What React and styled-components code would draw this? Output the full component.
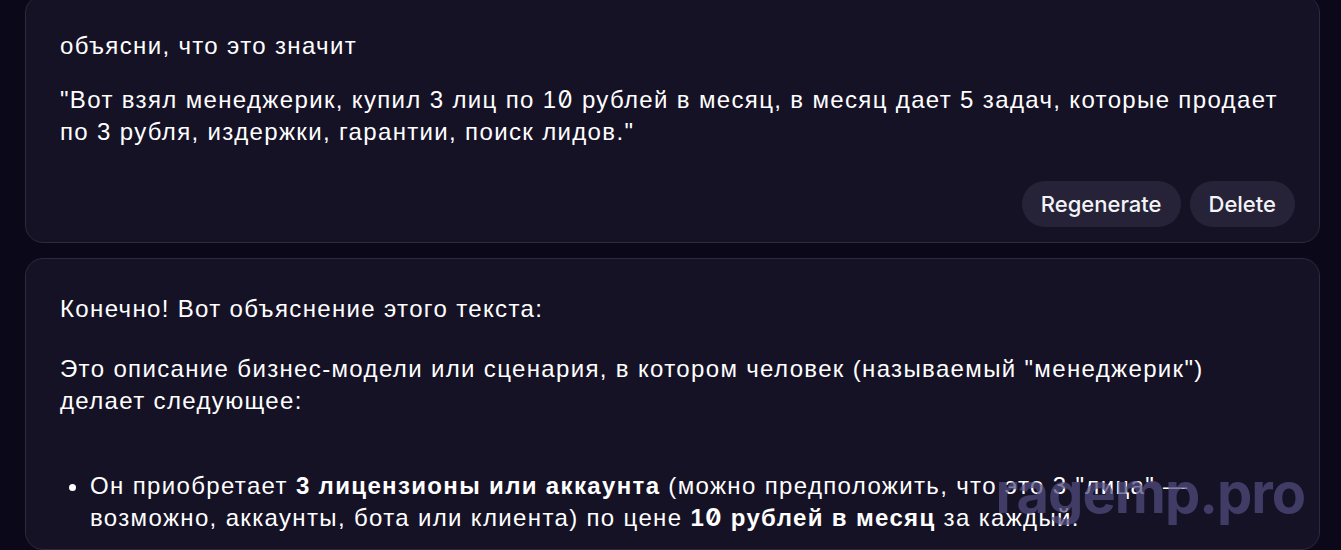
import styled, { createGlobalStyle } from 'styled-components';

const GlobalStyle = createGlobalStyle`
  html, body {
    margin: 0;
    padding: 0;
    background: #0b0819;
    overflow: hidden;
  }
  body {
    font-family: 'Liberation Sans', Arial, sans-serif;
    color: #ffffff;
  }
`;

const Page = styled.div`
  position: relative;
  height: 550px;
  padding: 0 21px 0 25px;
  overflow: hidden;
`;

const Feed = styled.div`
  display: flex;
  flex-direction: column;
  gap: 15px;
  margin-top: -5px;
`;

const Card = styled.div`
  background: #161226;
  border: 1px solid #2d2a3d;
  border-radius: 18px;
  padding: 34px 24px 15px 34px;
`;

const Text = styled.p`
  margin: 0 0 ${(p) => p.$gap || 0}px 0;
  font-size: 24px;
  line-height: 32px;
  letter-spacing: 1.35px;
  padding-right: 6px;
`;

const Zero = styled.span`
  font-family: 'Inter', sans-serif;
  font-feature-settings: 'zero' 1;
`;

const Actions = styled.div`
  display: flex;
  justify-content: flex-end;
  gap: 9px;
  margin-top: 33px;
`;

const Button = styled.button`
  height: 46px;
  padding: 0 19px;
  border: none;
  border-radius: 23px;
  background: #262338;
  color: #f4f4f8;
  font-family: 'Inter', sans-serif;
  font-size: 22px;
  font-weight: 500;
  cursor: pointer;
`;

const List = styled.ul`
  margin: 53px 0 0 0;
  padding-left: 30px;
  font-size: 24px;
  line-height: 32px;
  letter-spacing: 1.35px;
`;

const Item = styled.li`
  padding-right: 6px;
`;

const Watermark = styled.div`
  position: absolute;
  right: 36px;
  top: 459px;
  font-family: 'Inter', sans-serif;
  font-weight: 700;
  font-size: 56px;
  letter-spacing: -1px;
  color: rgba(80, 76, 128, 0.72);
  pointer-events: none;
`;

export default function App() {
  return (
    <>
      <GlobalStyle />
      <Page>
        <Feed>
          <Card>
            <Text $gap={22}>объясни, что это значит</Text>
            <Text>
              "Вот взял менеджерик, купил 3 лиц по 1<Zero>0</Zero> рублей в месяц, в месяц дает 5 задач, которые продает по 3 рубля, издержки, гарантии, поиск лидов."
            </Text>
            <Actions>
              <Button>Regenerate</Button>
              <Button>Delete</Button>
            </Actions>
          </Card>
          <Card>
            <Text $gap={28}>Конечно! Вот объяснение этого текста:</Text>
            <Text>
              Это описание бизнес-модели или сценария, в котором человек (называемый "менеджерик") делает следующее:
            </Text>
            <List>
              <Item>
                Он приобретает <b>3 лицензионы или аккаунта</b> (можно предположить, что это 3 "лица" — возможно, аккаунты, бота или клиента) по цене <b>1<Zero>0</Zero> рублей в месяц</b> за каждый.
              </Item>
            </List>
          </Card>
        </Feed>
        <Watermark>ragemp.pro</Watermark>
      </Page>
    </>
  );
}
